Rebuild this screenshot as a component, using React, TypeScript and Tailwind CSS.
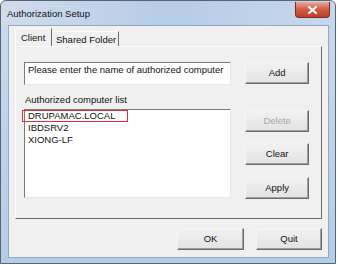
import React from "react";

function Btn({ label, disabled, className = "" }: { label: string; disabled?: boolean; className?: string }) {
  return (
    <div
      className={
        "flex items-center justify-center h-[22px] border border-t-[#f4f4f4] border-l-[#f4f4f4] border-r-[#6a6a6a] border-b-[#6a6a6a] bg-gradient-to-b from-[#f2f2f2] to-[#e2e2e2] shadow-[inset_-1px_-1px_0_#a0a0a0] text-[9.5px] " +
        (disabled ? "text-[#a8a8a8] " : "text-[#111] ") +
        className
      }
    >
      {label}
    </div>
  );
}

export default function App() {
  const items = ["DRUPAMAC.LOCAL", "IBDSRV2", "XIONG-LF"];
  return (
    <div
      className="w-[338px] h-[265px] bg-white overflow-hidden"
      style={{ fontFamily: '"Liberation Sans", Arial, sans-serif' }}
    >
      <div className="w-[336px] h-[264px] rounded-t-[6px] border border-[#5a6470] bg-gradient-to-b from-[#c9daee] to-[#b4cde8] flex flex-col">
        {/* title bar */}
        <div className="h-[24px] flex items-start justify-between bg-gradient-to-r from-[#cfdcec] via-[#b6cce6] to-[#c6d8ed] rounded-t-[6px]">
          <span className="pl-[6px] pt-[7px] text-[9.5px] leading-[12px] text-[#111]">Authorization Setup</span>
          <div className="mr-[5px] mt-[1px] w-[35px] h-[16px] rounded-b-[4px] border border-t-0 border-[#7a2a1e] bg-gradient-to-b from-[#e9a695] via-[#d05c44] to-[#c0402a] flex items-center justify-center">
            <svg width="9" height="8" viewBox="0 0 9 8">
              <path d="M1 1 L8 7 M8 1 L1 7" stroke="#fff" strokeWidth="2" strokeLinecap="square" />
            </svg>
          </div>
        </div>
        {/* client area */}
        <div className="ml-[7px] mr-[6px] mb-[5px] flex-1 bg-[#f0f0f0] border border-[#93a9c2] px-[6px] pt-[2px] flex flex-col">
          {/* tabs */}
          <div className="flex items-end h-[18px]">
            <div className="h-[18px] w-[37px] pl-[5px] pt-[3px] text-[9.5px] leading-[12px] text-[#111] border-r border-r-[#6a6a6a] border-t border-l border-[#fbfbfb] bg-[#f0f0f0] relative z-10">
              Client
            </div>
            <div className="h-[15px] w-[67px] pl-[4px] pt-[2px] text-[9.5px] leading-[12px] text-[#111] border-r border-r-[#6a6a6a] border-t border-t-[#fbfbfb]">
              Shared Folder
            </div>
          </div>
          {/* panel */}
          <div className="h-[173px] border border-t-[#fbfbfb] border-l-[#fbfbfb] border-r-[#6a6a6a] border-b-[#6a6a6a] flex pl-[8px] pt-[15px] pr-[12px]">
            <div className="w-[208px] flex flex-col">
              <div className="h-[23px] bg-white border border-t-[#7a7a7a] border-l-[#7a7a7a] border-r-[#e8e8e8] border-b-[#e8e8e8] px-[3px] pt-[1px] text-[9.5px] leading-[12px] text-[#111] whitespace-nowrap">
                Please enter the name of authorized computer
              </div>
              <div className="mt-[9px] pl-[1px] text-[9.5px] text-[#111] leading-[12px]">Authorized computer list</div>
              <div className="mt-[3px] h-[89px] bg-white border border-t-[#7a7a7a] border-l-[#7a7a7a] border-r-[#e8e8e8] border-b-[#e8e8e8] pl-[3px] text-[9.5px] leading-[11.5px] text-[#111]">
                {items.map((it, i) => (
                  <div
                    key={it}
                    className={i === 0 ? "w-[106px] -ml-[6px] pl-[5px] border border-[#e0303a] h-[12px] leading-[10px]" : ""}
                  >
                    {it}
                  </div>
                ))}
              </div>
            </div>
            <div className="ml-[14px] w-[64px] flex flex-col">
              <Btn label="Add" />
              <Btn label="Delete" disabled className="mt-[26px]" />
              <Btn label="Clear" className="mt-[11px]" />
              <Btn label="Apply" className="mt-[12px]" />
            </div>
          </div>
          {/* bottom buttons */}
          <div className="flex justify-end mt-[9px] gap-[12px]">
            <Btn label="OK" className="w-[67px]" />
            <Btn label="Quit" className="w-[66px]" />
          </div>
        </div>
      </div>
    </div>
  );
}
